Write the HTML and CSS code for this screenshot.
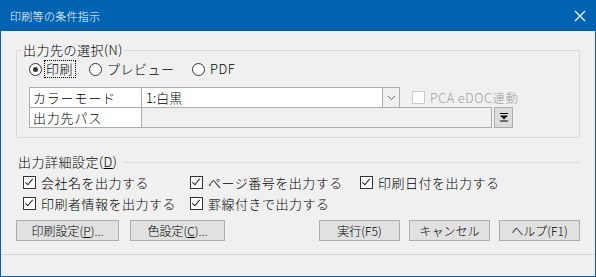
FILE: index.html
```html
<!DOCTYPE html>
<html lang="ja">
<head>
    <meta charset="UTF-8">
    <meta name="viewport" content="width=device-width, initial-scale=1.0">
    <title>印刷等の条件指示</title>
    <link rel="stylesheet" href="styles.css">
</head>
<body>
    <div class="window">
        <!-- タイトルバー -->
        <div class="titlebar">
            <span class="title">印刷等の条件指示</span>
            <svg class="close" width="12" height="12" viewBox="0 0 12 12">
                <path d="M1 1 L11 11 M11 1 L1 11" stroke="#fff" stroke-width="1.2" fill="none"/>
            </svg>
        </div>

        <div class="content">
            <!-- 出力先の選択 -->
            <fieldset class="group">
                <legend>出力先の選択(N)</legend>
                <div class="group-inner">
                    <div class="radios">
                        <label class="radio radio-print"><span class="circle checked"></span><span class="focus">印刷</span></label>
                        <label class="radio radio-preview"><span class="circle"></span><span>プレビュー</span></label>
                        <label class="radio"><span class="circle"></span><span>PDF</span></label>
                    </div>

                    <div class="table">
                        <div class="row">
                            <div class="label-cell">カラーモード</div>
                            <div class="select">
                                <span class="select-value">1:白黒</span>
                                <span class="select-btn">
                                    <svg width="9" height="6" viewBox="0 0 9 6"><path d="M1 1 L4.5 4.5 L8 1" stroke="#666" stroke-width="1" fill="none"/></svg>
                                </span>
                            </div>
                            <label class="check disabled"><span class="box"></span>PCA eDOC連動</label>
                        </div>
                        <div class="row">
                            <div class="label-cell">出力先パス</div>
                            <div class="path"></div>
                            <span class="path-btn">
                                <svg width="8" height="9" viewBox="0 0 8 9">
                                    <rect x="0" y="0" width="8" height="1" fill="#000"/>
                                    <polygon points="0,2.5 8,2.5 4,6.5" fill="#000"/>
                                    <rect x="0" y="7.5" width="8" height="1" fill="#000"/>
                                </svg>
                            </span>
                        </div>
                    </div>
                </div>
            </fieldset>

            <!-- 出力詳細設定 -->
            <div class="section-head">
                <span>出力詳細設定(<u>D</u>)</span>
                <span class="rule"></span>
            </div>

            <div class="checks">
                <label class="check"><span class="box on"></span>会社名を出力する</label>
                <label class="check"><span class="box on"></span>ページ番号を出力する</label>
                <label class="check"><span class="box on"></span>印刷日付を出力する</label>
                <label class="check"><span class="box on"></span>印刷者情報を出力する</label>
                <label class="check"><span class="box on"></span>罫線付きで出力する</label>
            </div>

            <!-- ボタン -->
            <div class="buttons">
                <div class="btn-group">
                    <button class="btn btn-print">印刷設定(<u>P</u>)...</button>
                    <button class="btn btn-color">色設定(<u>C</u>)...</button>
                </div>
                <div class="btn-group">
                    <button class="btn btn-main">実行(F5)</button>
                    <button class="btn btn-main">キャンセル</button>
                    <button class="btn btn-main">ヘルプ(F1)</button>
                </div>
            </div>

            <div class="separator"></div>
        </div>
    </div>
</body>
</html>
```

FILE: styles.css
```css
/* 全体 */
html, body {
    margin: 0;
    padding: 0;
}

body {
    font-family: "Noto Sans CJK JP", "Noto Sans", sans-serif;
    font-size: 13px;
    font-weight: 300;
    color: #000;
    background-color: #f0f0f0;
}

.window {
    width: 596px;
    height: 277px;
    box-sizing: border-box;
    border: 1px solid #0063b1;
    border-top: none;
    background-color: #f0f0f0;
    display: flex;
    flex-direction: column;
}

/* タイトルバー */
.titlebar {
    height: 31px;
    margin: 0 -1px;
    background-color: #0063b1;
    color: #fff;
    display: flex;
    align-items: center;
    justify-content: space-between;
    padding: 0 10px 0 10px;
    flex-shrink: 0;
}

.title {
    font-size: 11px;
    letter-spacing: 0.3px;
    line-height: 16px;
}

.content {
    flex: 1;
    padding-top: 11px;
    display: flex;
    flex-direction: column;
}

/* グループ枠 */
.group {
    margin: 0 15px;
    padding: 0 0 9px 0;
    border: 1px solid #d9d9d9;
    min-width: 0;
}

.group legend {
    margin-left: 5px;
    padding: 0 1px;
    line-height: 16px;
    letter-spacing: 0.5px;
}

.group-inner {
    padding: 3px 0 0 12px;
}

/* ラジオボタン */
.radios {
    display: flex;
    height: 16px;
    align-items: center;
    letter-spacing: 0.5px;
}

.radio {
    display: flex;
    align-items: center;
    line-height: 16px;
}

.radio-print {
    width: 60px;
}

.radio-preview {
    width: 103px;
}

.circle {
    width: 11px;
    height: 11px;
    border: 1px solid #333;
    border-radius: 50%;
    background-color: #fff;
    margin-right: 5px;
    position: relative;
    flex-shrink: 0;
}

.circle.checked::after {
    content: "";
    position: absolute;
    left: 3px;
    top: 3px;
    width: 5px;
    height: 5px;
    border-radius: 50%;
    background-color: #333;
}

.focus {
    outline: 1px dotted #000;
    padding: 0 2px 0 1px;
    margin-left: -2px;
}

/* 表 */
.table {
    margin-top: 10px;
}

.row {
    display: flex;
    align-items: center;
    height: 21px;
}

.row + .row {
    margin-top: -1px;
}

.label-cell {
    width: 113px;
    height: 21px;
    box-sizing: border-box;
    border: 1px solid #acacac;
    background-color: #fff;
    padding-left: 3px;
    line-height: 19px;
    letter-spacing: 0.8px;
}

.select {
    width: 259px;
    height: 21px;
    box-sizing: border-box;
    margin-left: -1px;
    border: 1px solid #acacac;
    background-color: #fff;
    display: flex;
    justify-content: space-between;
}

.select-value {
    padding-left: 4px;
    line-height: 19px;
}

.select-btn {
    width: 16px;
    border-left: 1px solid #acacac;
    background-color: #f0f0f0;
    display: flex;
    align-items: center;
    justify-content: center;
}

.path {
    width: 351px;
    height: 21px;
    box-sizing: border-box;
    margin-left: -1px;
    border: 1px solid #acacac;
    background-color: #f0f0f0;
}

.path-btn {
    width: 19px;
    height: 21px;
    box-sizing: border-box;
    margin-left: 2px;
    border: 1px solid #adadad;
    background-color: #dcdcdc;
    display: flex;
    align-items: center;
    justify-content: center;
}

/* チェックボックス */
.check {
    display: flex;
    align-items: center;
    white-space: nowrap;
    letter-spacing: 0.5px;
}

.box {
    width: 11px;
    height: 11px;
    border: 1px solid #333;
    background-color: #fff;
    margin-right: 5px;
    position: relative;
    flex-shrink: 0;
}

.box.on::after {
    content: "";
    position: absolute;
    left: 3px;
    top: 0px;
    width: 3px;
    height: 7px;
    border-right: 1.3px solid #222;
    border-bottom: 1.3px solid #222;
    transform: rotate(40deg);
}

.check.disabled {
    margin-left: 12px;
    color: #a0a0a0;
    font-size: 12.5px;
    letter-spacing: 0.6px;
}

.check.disabled .box {
    border-color: #cccccc;
}

/* 出力詳細設定 */
.section-head {
    margin: 16px 16px 0 17px;
    display: flex;
    align-items: center;
    line-height: 16px;
    letter-spacing: 0.5px;
}

.rule {
    flex: 1;
    height: 1px;
    margin-left: 6px;
    background-color: #dcdcdc;
}

.checks {
    margin: 2px 0 0 22px;
    display: grid;
    grid-template-columns: 167px 170px auto;
    grid-auto-rows: 21px;
    align-items: center;
}

/* ボタン */
.buttons {
    margin: 6px 15px 0 15px;
    display: flex;
    justify-content: space-between;
}

.btn-group {
    display: flex;
    gap: 9px;
}

.btn {
    height: 21px;
    padding: 0;
    border: 1px solid #adadad;
    background-color: #e1e1e1;
    font-family: "Noto Sans CJK JP", "Noto Sans", sans-serif;
    font-size: 12px;
    font-weight: 300;
    line-height: 19px;
    color: #000;
}

.btn-print {
    width: 103px;
    margin-right: 2px;
}

.btn-color {
    width: 95px;
}

.btn-main {
    width: 81px;
}

.separator {
    margin-top: 13px;
    height: 1px;
    background-color: #d5d5d5;
}
```
